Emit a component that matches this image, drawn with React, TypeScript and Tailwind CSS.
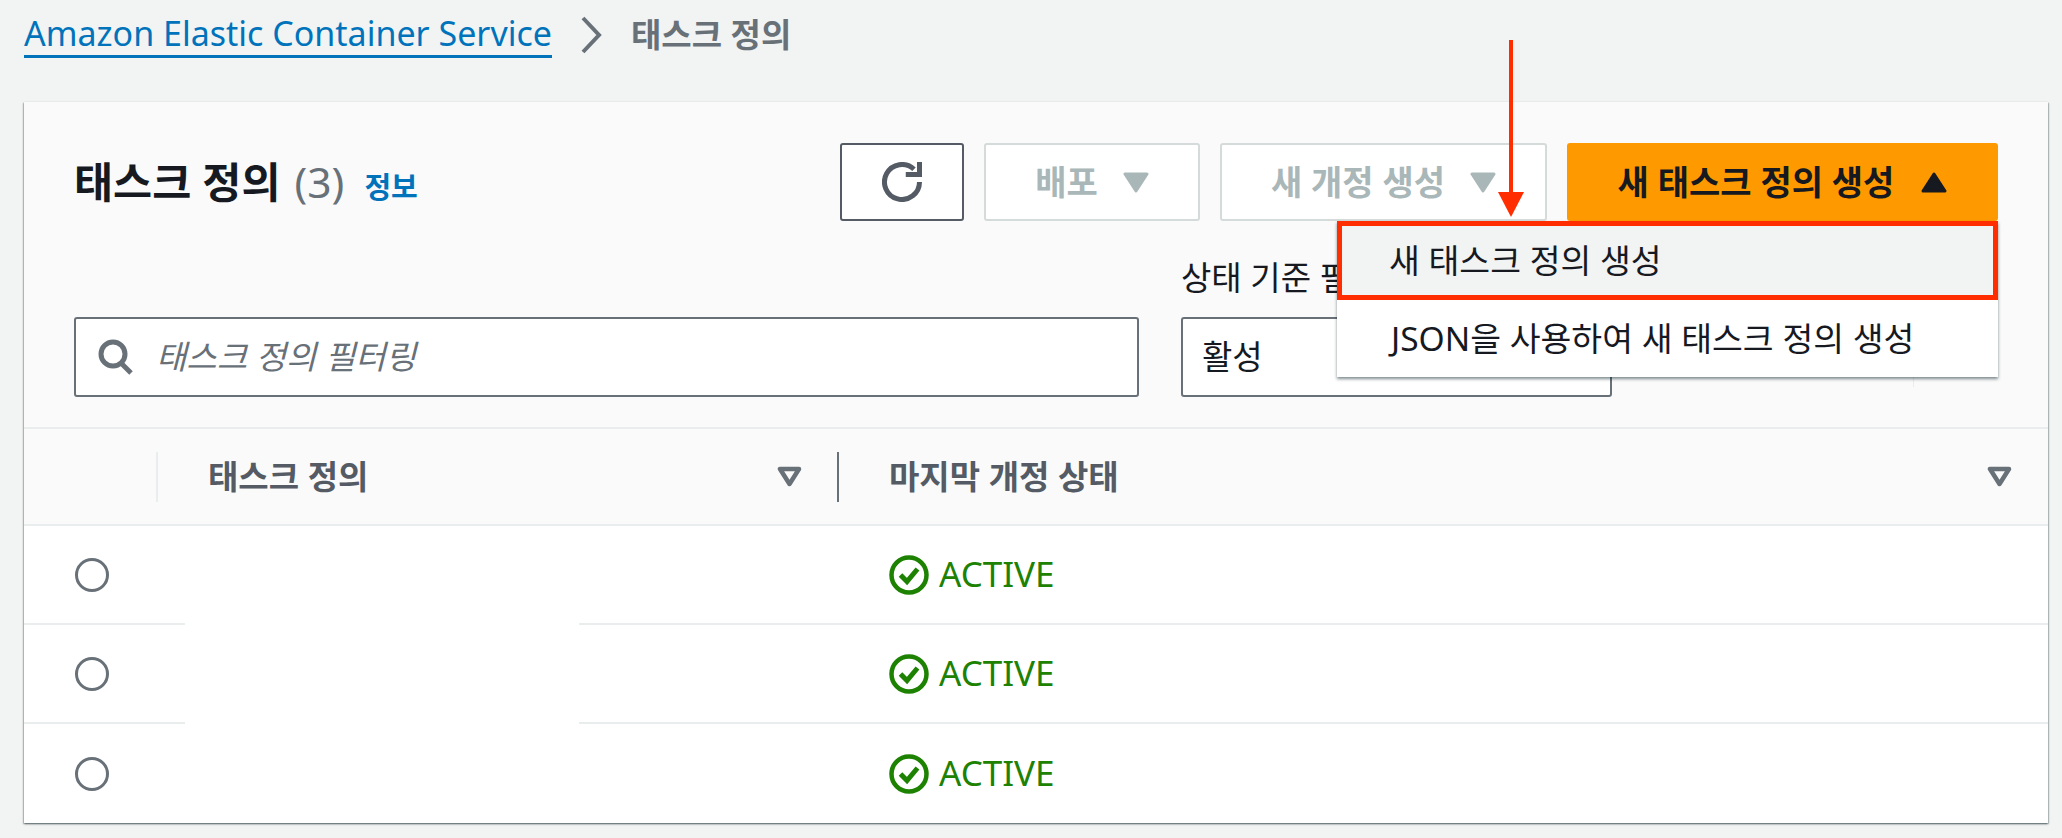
const font = { fontFamily: '"Noto Sans", "Noto Sans CJK KR", sans-serif' };

function Caret({ up = false, className = '' }: { up?: boolean; className?: string }) {
  return (
    <svg viewBox="0 0 26 21" className={`w-[26px] h-[21px] ${className}`}>
      <path d={up ? 'M13 2 L24 19 H2 Z' : 'M2 2 H24 L13 19 Z'} fill="currentColor" stroke="currentColor" strokeWidth="3" strokeLinejoin="round" />
    </svg>
  );
}

function SortIcon() {
  return (
    <svg viewBox="0 0 25 21" className="w-[25px] h-[21px] text-[#687078]">
      <path d="M3 3 H22 L12.5 18 Z" fill="none" stroke="currentColor" strokeWidth="4.5" strokeLinejoin="round" />
    </svg>
  );
}

function StatusIcon() {
  return (
    <svg viewBox="0 0 40 40" className="w-10 h-10 shrink-0 text-[#1d8102]">
      <circle cx="20" cy="20" r="17.5" fill="none" stroke="currentColor" strokeWidth="4.5" />
      <path d="M11.5 20 L18 26.5 L28.5 14" fill="none" stroke="currentColor" strokeWidth="5" />
    </svg>
  );
}

function Row({ last = false }: { last?: boolean }) {
  return (
    <div className={`grid grid-cols-[134px_681px_1fr] items-center h-[99px] ${last ? '' : 'border-b-[2px] border-[#eaeded]'}`}>
      <div className="pl-[51px]">
        <div className="w-[34px] h-[34px] rounded-full border-[3px] border-[#687078]" />
      </div>
      <div />
      <div className="flex items-center gap-[10px] pl-[50px] text-[#1d8102] text-[35px]">
        <StatusIcon />
        <span>ACTIVE</span>
      </div>
    </div>
  );
}

export default function App() {
  return (
    <div style={font} className="relative min-h-[838px] bg-[#f2f3f3] text-[#16191f] overflow-hidden">
      {/* breadcrumb */}
      <div className="flex items-center h-[102px] pl-6 pb-[32px]">
        <a className="text-[#0073bb] text-[34px] leading-[42px] pb-px border-b-[3px] border-[#0073bb]">Amazon Elastic Container Service</a>
        <svg viewBox="0 0 22 38" className="ml-[28px] w-[22px] h-[38px] text-[#687078]">
          <path d="M3 2 L19 19 L3 36" fill="none" stroke="currentColor" strokeWidth="4" />
        </svg>
        <span className="ml-[29px] text-[#687078] text-[33px] font-bold">태스크 정의</span>
      </div>

      {/* card */}
      <div className="ml-6 mr-[14px] h-[721px] bg-white shadow-[0_1px_2px_rgba(0,28,36,0.5),1px_1px_1px_rgba(0,28,36,0.15),-1px_1px_1px_rgba(0,28,36,0.15)]">
        <div className="bg-[#fafafa] px-[50px] pt-[41px] pb-[30px] border-b-[2px] border-[#eaeded]">
          <div className="flex items-center justify-between h-[78px]">
            <div className="flex items-baseline">
              <h1 className="text-[42.5px] font-bold">태스크 정의</h1>
              <span className="ml-[14px] text-[42.5px] text-[#687078]">(3)</span>
              <a className="ml-[20px] text-[29px] font-bold text-[#0073bb]">정보</a>
            </div>
            <div className="relative flex items-center gap-5 h-full">
              <button className="flex items-center justify-center w-[124px] h-full bg-white border-2 border-[#545b64] rounded-[3px]">
                <svg viewBox="0 0 16 16" className="w-10 h-10 text-[#545b64]" fill="none" stroke="currentColor" strokeWidth="2">
                  <path d="M15 8a7 7 0 1 1-2.2-5.1" />
                  <path d="M9.5 5H15V0" />
                </svg>
              </button>
              <button className="flex items-center justify-center gap-[25px] w-[216px] h-full bg-white border-2 border-[#d5dbdb] rounded-[3px] text-[#aab7b8] text-[34px] font-bold">
                배포
                <Caret />
              </button>
              <button className="flex items-center justify-center gap-[25px] w-[327px] h-full bg-white border-2 border-[#d5dbdb] rounded-[3px] text-[#aab7b8] text-[34px] font-bold">
                새 개정 생성
                <Caret />
              </button>
              <button className="flex items-center justify-center gap-[27px] w-[431px] h-full bg-[#ff9900] rounded-[3px] text-[34px] font-bold">
                새 태스크 정의 생성
                <Caret up />
              </button>

              {/* open dropdown */}
              <div className="absolute right-0 top-full z-10 w-[661px] bg-white shadow-[0_2px_3px_rgba(0,28,36,0.5)] text-[33.5px]">
                <div className="flex items-center h-[79px] pl-[47px] bg-[#f2f3f3] border-[5px] border-[#ff2d00]">새 태스크 정의 생성</div>
                <div className="flex items-center h-[77px] pl-[54px]">JSON을 사용하여 새 태스크 정의 생성</div>
              </div>
            </div>
          </div>

          <div className="flex items-end gap-[42px] mt-[39px]">
            <div className="flex items-center gap-[22px] w-[1065px] h-20 pl-[22px] bg-white border-2 border-[#687078] rounded-[3px]">
              <svg viewBox="0 0 36 36" className="w-9 h-9 text-[#687078]" fill="none" stroke="currentColor" strokeWidth="5">
                <circle cx="15" cy="15" r="12" />
                <path d="M23 24 L33 34" />
              </svg>
              <span className="text-[33px] italic text-[#687078]">태스크 정의 필터링</span>
            </div>
            <div className="w-[431px]">
              <div className="text-[33px] leading-[36px] mb-[21px]">상태 기준 필터링</div>
              <div className="flex items-center h-20 pl-[19px] bg-white border-2 border-[#687078] rounded-[3px] text-[33px]">활성</div>
            </div>
            <div className="w-px h-[70px] ml-[259px] mb-[10px] bg-[#eaeded]" />
          </div>
        </div>

        {/* table */}
        <div className="grid grid-cols-[134px_681px_1fr] items-center h-[97px] bg-[#fafafa] border-b-[2px] border-[#eaeded] text-[#545b64] text-[33px] font-bold">
          <div className="h-[50px] border-r-[2px] border-[#eaeded]" />
          <div className="flex items-center justify-between h-[50px] pl-[50px] pr-[35px] border-r-[2px] border-[#687078]">
            <span>태스크 정의</span>
            <SortIcon />
          </div>
          <div className="flex items-center justify-between pl-[50px] pr-[36px]">
            <span>마지막 개정 상태</span>
            <SortIcon />
          </div>
        </div>
        <div className="relative">
          <Row />
          <Row />
          <Row last />
          {/* blanked out names */}
          <div className="absolute left-[161px] top-[60px] w-[394px] h-[150px] bg-white" />
        </div>
      </div>

      {/* annotation arrow */}
      <svg viewBox="0 0 26 178" className="absolute left-[1498px] top-[39px] z-20 w-[26px] h-[178px]">
        <path d="M13 1 V155" stroke="#ff2d00" strokeWidth="4" />
        <path d="M0 153 H26 L13 178 Z" fill="#ff2d00" />
      </svg>
    </div>
  );
}
